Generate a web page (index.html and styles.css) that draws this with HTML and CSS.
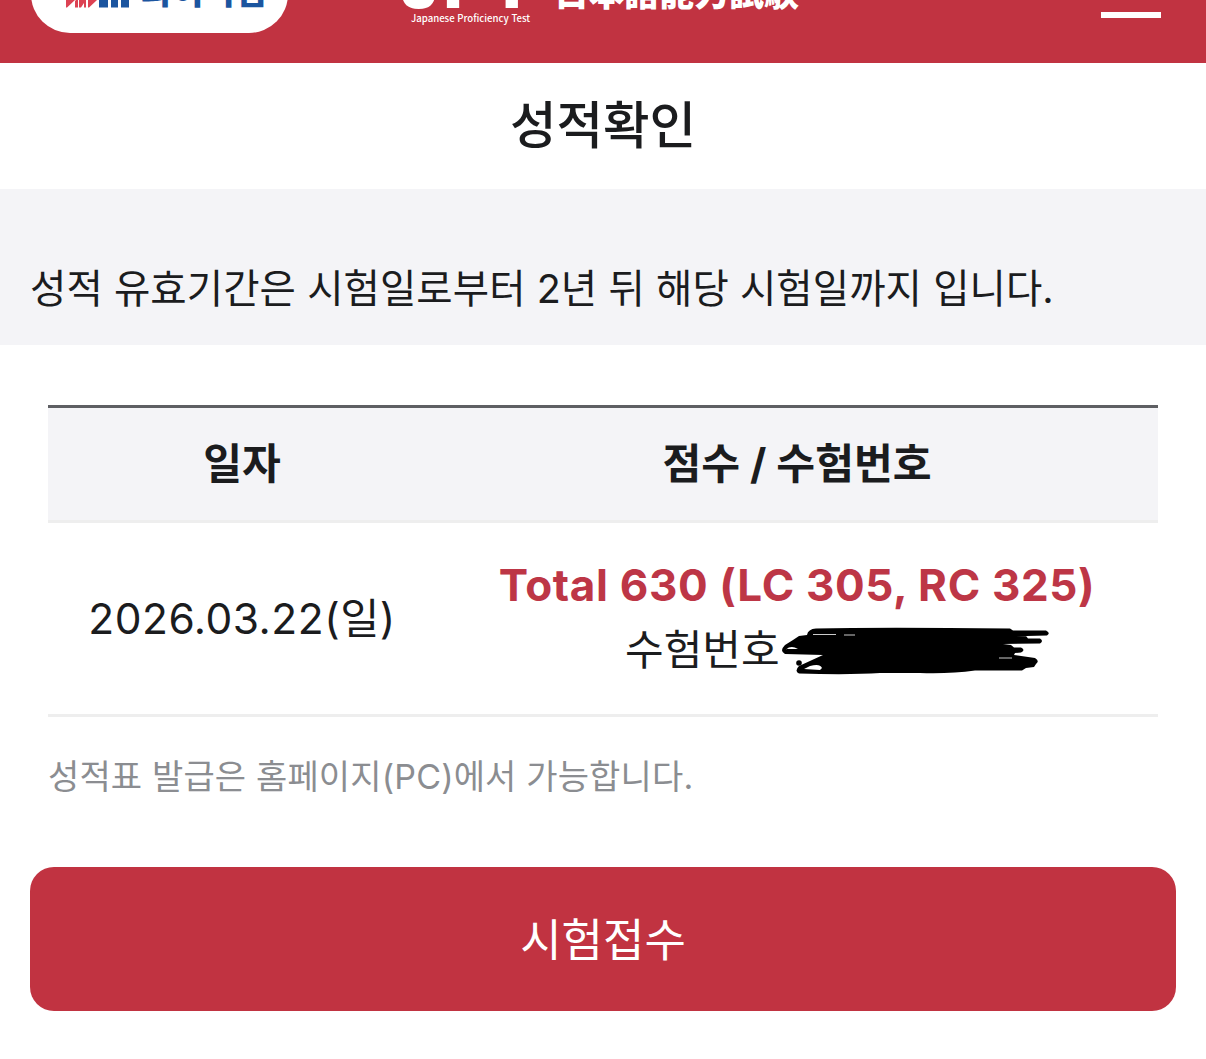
FILE: index.html
```html
<!DOCTYPE html>
<html lang="ko">
<head>
<meta charset="utf-8">
<title>성적확인</title>
<link rel="stylesheet" href="styles.css">
</head>
<body>
<header class="header">
  <div class="brand">
    <svg class="brand-mark" width="66" height="8" viewBox="0 0 66 8"><g fill="#dc4253"><path d="M0 7.500V0H9L1 7.500Z"/><path d="M9 1V7.500H12V0H10Z"/><path d="M13 7.500V0H20V7.500H18V3L15 7.500Z"/><path d="M22 7.500V0H31L23 7.500Z"/></g><path fill="#1b559f" d="M33 0H42V7.500H33ZM45 0H52V7.500H45ZM55 0H63V7.500H55Z"/></svg>
    <span class="brand-name">와이비엠</span>
  </div>
  <div class="exam">
    <span class="exam-code">JPT</span>
    <span class="exam-caption">Japanese Proficiency Test</span>
  </div>
  <span class="exam-title" lang="ja">日本語能力試験</span>
  <span class="menu"></span>
</header>
<h1 class="title"><span>성적확인</span></h1>
<p class="notice"><span>성적 유효기간은 시험일로부터 2년 뒤 해당 시험일까지 입니다.</span></p>
<main class="content">
  <div class="scores">
    <div class="row row-head">
      <div class="cell">일자</div>
      <div class="cell">점수 / 수험번호</div>
    </div>
    <div class="row row-body">
      <div class="cell"><span class="date">2026.03.22(일)</span></div>
      <div class="cell">
        <strong class="total">Total 630 (LC 305, RC 325)</strong>
        <div class="number"><span>수험번호</span>
          <svg class="scribble" width="270" height="52" viewBox="780 625 270 52"><path d="M807 636Q808 630 816 629.500Q880 628 1010 629.500L1013 631.500H1046Q1051 634 1047 636.500L1004 637.500L1026 637L1028 639.500H1040Q1044 642 1040 644.500L1003 645L1011 646L1014 648.500H1021Q1026 651 1021 653.500L1015 654L1014 656L1035 659Q1040 662 1036 665L1034 668L1026 669L1022 671.500H975Q950 675 920 674H880Q850 676 799 674.500Q794 672 799 667L823 656L785 655Q779 652 785 646L793 641L799 637Z"/><path d="M786 650.500Q791 646 798 650H786ZM804 670L810 667Q820 664 822 669L820 671Z" fill="#fff"/><path d="M813 635.500H836M844 636H855M999 659H1012" stroke="#fff" stroke-width=".8"/><circle cx="799" cy="664" r="2.800"/></svg>
        </div>
      </div>
    </div>
  </div>
  <p class="hint">성적표 발급은 홈페이지(PC)에서 가능합니다.</p>
</main>
<button class="apply" type="button">시험접수</button>
</body>
</html>
```

FILE: styles.css
```css
* { box-sizing: border-box; }
body { margin: 0; background: #fff; color: #1b1c1e; font-family: Inter, "Noto Sans CJK KR", sans-serif; }
.header { display: flex; align-items: flex-end; height: 63px; padding: 0 45px 0 31px; overflow: hidden; background: #c13341; color: #fff; }
.brand { display: flex; align-items: flex-end; gap: 9px; flex: none; width: 257px; height: 78px; margin-bottom: 30px; padding: 0 0 25px 35px; border-radius: 39px; background: #fff; }
.brand-mark { flex: none; }
.brand-name { font: 900 34px/34px "Noto Sans CJK KR", sans-serif; color: #1b559f; white-space: nowrap; margin-bottom: 1px; }
.exam { display: flex; flex-direction: column; flex: none; width: 153px; margin: 0 0 38px 113px; }
.exam-code { margin-bottom: 1px; font: 900 62px/48px Inter, sans-serif; letter-spacing: 6px; }
.exam-caption { padding-left: 10px; font: 500 9.600px/14px "Noto Sans CJK KR", sans-serif; white-space: nowrap; }
.exam-title { flex: none; font: 900 35px/40px "Noto Sans CJK JP", sans-serif; margin-bottom: 52px; white-space: nowrap; }
.menu { width: 60px; height: 6px; margin: 0 0 45px auto; background: #fff; }
.title { display: flex; align-items: center; justify-content: center; height: 126px; margin: 0; font-size: 50.600px; line-height: 60px; font-weight: 500; }
.notice { display: flex; align-items: center; height: 156px; margin: 0; padding: 43px 30px 0; background: #f4f4f7; font-size: 39.500px; line-height: 60px; letter-spacing: .06px; white-space: nowrap; }
.content { padding: 60px 48px 0; }
.row { display: grid; grid-template-columns: 388px 1fr; border-bottom: 3px solid #eee; }
.row-head { height: 118px; border-top: 3px solid #5e5f63; background: #f4f4f7; font-size: 42.200px; font-weight: 700; }
.row-body { height: 194px; font-size: 42px; }
.cell { display: flex; flex-direction: column; align-items: center; justify-content: center; white-space: nowrap; line-height: 64px; }
.date { font-size: 42.500px; letter-spacing: .5px; }
.total { margin-top: -2px; color: #bd3646; font-size: 44px; font-weight: 700; letter-spacing: .65px; }
.number { display: flex; align-items: center; align-self: flex-start; margin: 1px 0 0 189px; }
.scribble { flex: none; }
.hint { margin: 30px 0 0; color: #8b8d91; font-size: 34px; line-height: 60px; letter-spacing: .15px; white-space: nowrap; }
.apply { display: flex; align-items: center; justify-content: center; width: 1146px; height: 144px; margin: 60px 30px 0; padding: 0 0 2px; border: 0; border-radius: 24px; background: #c13341; color: #fff; font: 400 45px/60px "Noto Sans CJK KR", sans-serif; }
```
